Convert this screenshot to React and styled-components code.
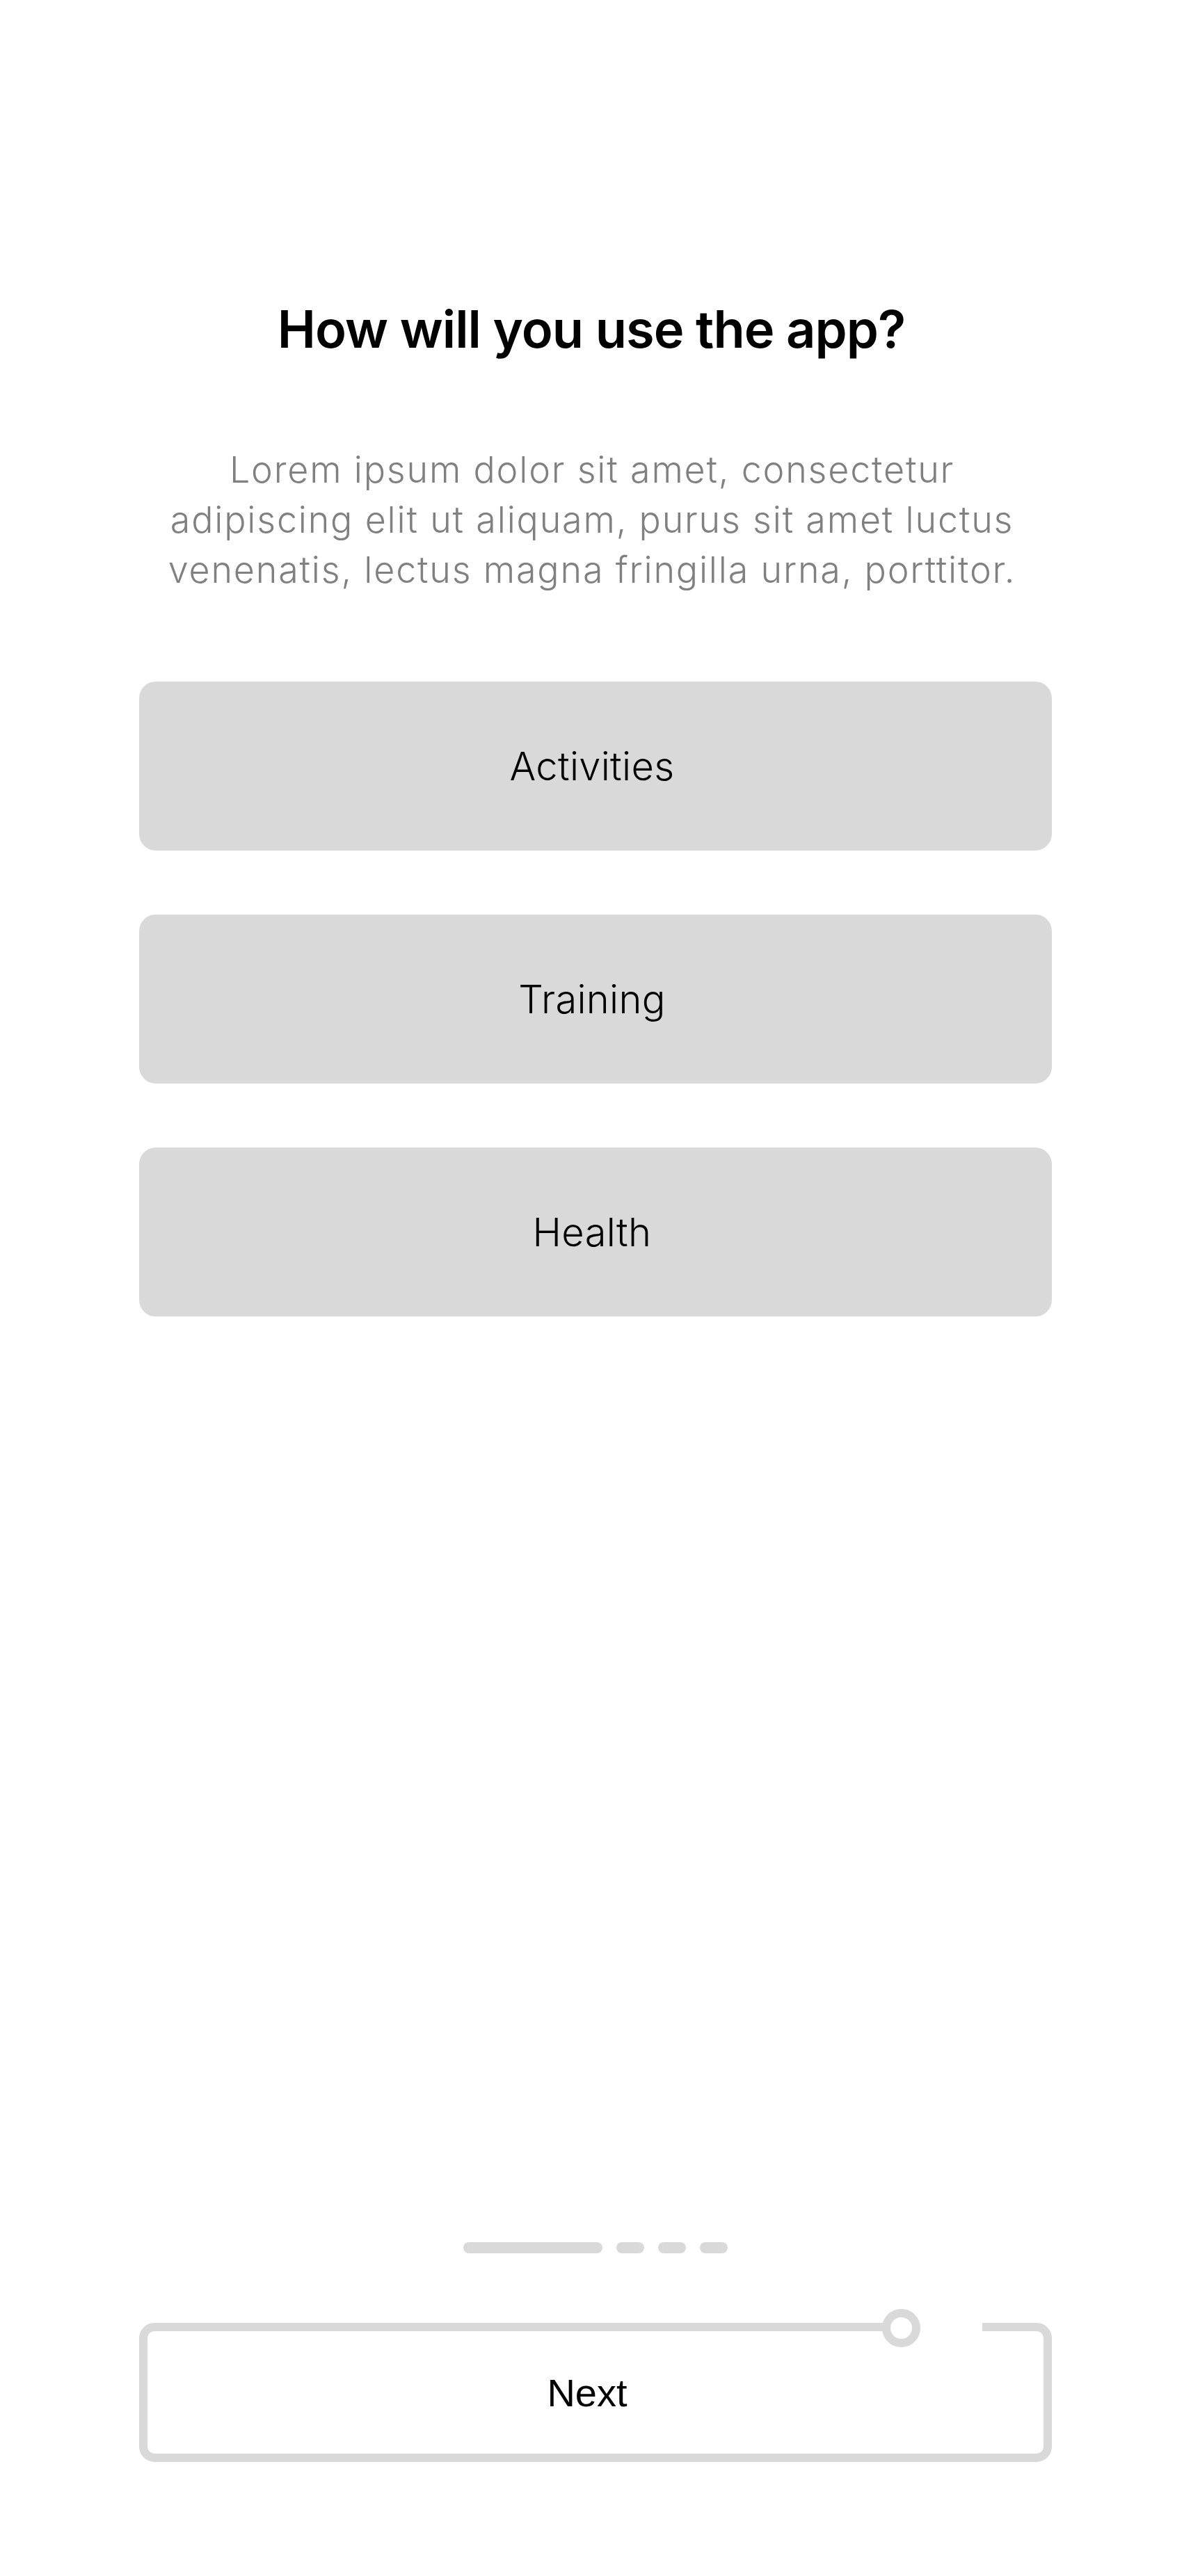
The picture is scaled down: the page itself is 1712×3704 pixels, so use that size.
import styled, { createGlobalStyle } from "styled-components";

const GlobalStyle = createGlobalStyle`
  body {
    margin: 0;
    background: #fff;
    font-family: Inter, "Noto Sans", sans-serif;
  }
`;

const Screen = styled.main`
  width: 1712px;
  min-height: 3704px;
  display: flex;
  flex-direction: column;
  align-items: center;
  padding: 431px 200px 164px;
  box-sizing: border-box;
`;

const Title = styled.h1`
  margin: 0;
  padding-right: 12px;
  font-size: 74px;
  line-height: 84px;
  font-weight: 600;
  letter-spacing: -1px;
  color: #000;
  text-align: center;
`;

const Intro = styled.p`
  margin: 125px 0 0;
  padding-right: 10px;
  width: 1290px;
  font-size: 52px;
  line-height: 72px;
  font-weight: 300;
  letter-spacing: 1.8px;
  color: #808080;
  text-align: center;
`;

const Options = styled.div`
  margin-top: 124px;
  width: 100%;
  display: flex;
  flex-direction: column;
  gap: 92px;
`;

const Option = styled.button`
  height: 243px;
  padding: 0 10px 0 0;
  border: none;
  border-radius: 24px;
  background: #d9d9d9;
  font-family: inherit;
  font-size: 56px;
  font-weight: 300;
  letter-spacing: 0.3px;
  color: #000;
  cursor: pointer;
`;

const Spacer = styled.div`
  flex: 1;
`;

const Pager = styled.div`
  display: flex;
  gap: 20px;
  margin-bottom: 100px;
`;

const Dash = styled.span`
  width: ${(p) => (p.$active ? "200px" : "40px")};
  height: 16px;
  border-radius: 8px;
  background: #d9d9d9;
`;

const NextButton = styled.button`
  position: relative;
  width: 100%;
  height: 200px;
  box-sizing: border-box;
  padding: 0 24px 0 0;
  border: 12px solid #d9d9d9;
  border-radius: 22px;
  background: #fff;
  font-family: "Liberation Sans", Arial, sans-serif;
  font-size: 56px;
  color: #000;
  cursor: pointer;
`;

const Gap = styled.span`
  position: absolute;
  top: -13px;
  left: 1084px;
  width: 116px;
  height: 14px;
  background: #fff;
`;

const Knob = styled.span`
  position: absolute;
  top: -32px;
  left: 1056px;
  width: 55px;
  height: 55px;
  box-sizing: border-box;
  border: 12px solid #d9d9d9;
  border-radius: 50%;
  background: #fff;
`;

const options = ["Activities", "Training", "Health"];

const App = () => {
  return (
    <>
      <GlobalStyle />
      <Screen>
        <Title>How will you use the app?</Title>
        <Intro>
          Lorem ipsum dolor sit amet, consectetur adipiscing elit ut aliquam,
          purus sit amet luctus venenatis, lectus magna fringilla urna,
          porttitor.
        </Intro>
        <Options>
          {options.map((o) => (
            <Option key={o}>{o}</Option>
          ))}
        </Options>
        <Spacer />
        <Pager>
          <Dash $active />
          <Dash />
          <Dash />
          <Dash />
        </Pager>
        <NextButton>
          Next
          <Gap />
          <Knob />
        </NextButton>
      </Screen>
    </>
  );
};

export default App;
